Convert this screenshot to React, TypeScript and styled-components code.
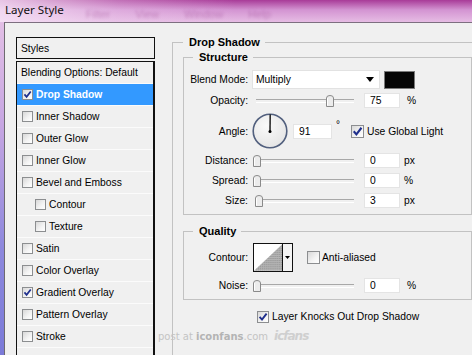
import React from 'react';
import styled, { createGlobalStyle } from 'styled-components';

const Global = createGlobalStyle`
  html, body { margin: 0; padding: 0; }
  body {
    width: 472px; height: 355px; overflow: hidden;
    font-family: "Liberation Sans", Arial, sans-serif;
    font-size: 10.3px; color: #000;
  }
`;

const Window = styled.div`
  width: 472px; height: 355px; overflow: hidden; position: relative;
  display: flex; flex-direction: column;
  background: linear-gradient(180deg, #e8c4e6 0%, #c7a6e2 35%, #8d88dd 70%, #7b7ad8 100%);
`;

const TitleBar = styled.div`
  height: 22px; flex: none; display: flex; align-items: center;
  padding-left: 5px; box-sizing: border-box;
  background:
    linear-gradient(90deg, rgba(248,232,248,0.8) 0%, rgba(240,210,240,0.35) 25%, rgba(230,180,230,0) 50%),
    linear-gradient(180deg, #a83b98 0%, #d394d2 45%, #e6bce4 100%);
`;

const Title = styled.span`
  font-family: "Noto Sans", "Open Sans", sans-serif;
  font-size: 11.6px; color: #111; line-height: 16px; margin-top: -3px;
`;

const BlurMenu = styled.span`
  margin-left: 22px; margin-top: 6px;
  font-family: "Liberation Sans", sans-serif; font-size: 11px; word-spacing: 22px;
  color: rgba(140, 50, 130, 0.35); filter: blur(1.4px);
`;

const Body = styled.div`
  flex: 1; display: flex; align-items: flex-start;
  margin-left: 4px; border-left: 1px solid #6e6a70; border-top: 1px solid #7d6f80;
  background: #f0f0f0; padding: 13px 0 0 11px; overflow: hidden; position: relative;
`;

const Sidebar = styled.div`
  width: 139px; flex: none; margin-top: 1px;
  display: flex; flex-direction: column; gap: 1px; height: 420px;
`;

const SideHeader = styled.div`
  height: 22px; border: 1px solid #111; display: flex; align-items: center;
  padding-left: 4px; box-sizing: border-box; flex: none;
`;

const SideList = styled.div`
  flex: 1; margin-top: 1px; border: 1px solid #111; border-right-width: 2px; display: flex; flex-direction: column;
`;

const SideRow = styled.div<{ $indent: number; $selected?: boolean }>`
  height: 21px; flex: none; border-bottom: 1px solid #fbfbfb;
  display: flex; align-items: center; gap: 3px;
  padding-left: ${p => p.$indent}px;
  background: ${p => (p.$selected ? '#3399ff' : '#f0f0f0')};
  color: ${p => (p.$selected ? '#fff' : '#000')};
  font-weight: ${p => (p.$selected ? 'bold' : 'normal')};
  white-space: nowrap;
`;

const Box = styled.span<{ $size: number }>`
  width: ${p => p.$size}px; height: ${p => p.$size}px; flex: none;
  box-sizing: border-box; border: 1px solid #8c8e90;
  background: linear-gradient(135deg, #d8d8d8 0%, #f4f4f4 60%, #ffffff 100%);
  display: flex; align-items: center; justify-content: center;
`;

function Check({ on, size = 11 }: { on?: boolean; size?: number }) {
  return (
    <Box $size={size}>
      {on && (
        <svg width={size - 2} height={size - 2} viewBox="0 0 10 10">
          <path d="M1.6 4.8 L4 7.6 L8.6 1.6" fill="none" stroke="#1f2f8c" strokeWidth="1.9" />
        </svg>
      )}
    </Box>
  );
}

const Main = styled.div`
  margin-left: 17px; flex: none; display: flex; flex-direction: column;
`;

const Group = styled.fieldset<{ $width: number; $pad: string }>`
  margin: 0; min-width: 0; width: ${p => p.$width}px; box-sizing: border-box;
  border: 1px solid #c2c2c2; padding: ${p => p.$pad};
`;

const Legend = styled.legend`
  font-weight: bold; font-size: 11px; line-height: 13px; padding: 0 5px 0 6px;
`;

const SubGroup = styled(Group)<{ $top: number }>`
  margin-top: ${p => p.$top}px;
`;

const Row = styled.div<{ $h: number; $top?: number }>`
  display: flex; align-items: center; height: ${p => p.$h}px;
  margin-top: ${p => p.$top ?? 0}px; white-space: nowrap;
`;

const Label = styled.span`
  width: 55px; flex: none; display: flex; justify-content: flex-end;
  margin-right: 4px; white-space: nowrap;
`;

const Select = styled.div`
  width: 128px; height: 19px; box-sizing: border-box; background: #fff;
  border: 1px solid #e2e2e2; display: flex; align-items: center; justify-content: space-between;
  padding: 0 5px 0 3px;
`;

const Swatch = styled.div`
  width: 31px; height: 18px; margin-left: 4px; box-sizing: border-box;
  background: #050505; border: 1px solid #7a7a7a;
`;

const Input = styled.div<{ $w: number; $left: number }>`
  width: ${p => p.$w}px; height: 15px; box-sizing: border-box; margin-left: ${p => p.$left}px;
  background: #fff; border: 1px solid #e4e4e4; padding-left: 5px;
  display: flex; align-items: center;
`;

const Unit = styled.span<{ $left: number }>`
  margin-left: ${p => p.$left}px;
`;

const SliderWrap = styled.div`
  width: 104px; height: 15px; flex: none; position: relative;
  display: flex; align-items: center;
`;

const Track = styled.div`
  margin: 0 2px 0 4px; flex: 1; height: 2px; border-top: 1px solid #a8a8a8; border-bottom: 1px solid #fff;
`;

const Thumb = styled.svg`
  position: absolute; top: 2px;
`;

function Slider({ value }: { value: number }) {
  const left = 4 + (value / 100) * 98 - 3.5;
  return (
    <SliderWrap>
      <Track />
      <Thumb width="8" height="12" viewBox="0 0 8 12" style={{ left }}>
        <path d="M0.5 11.5 V3 Q0.5 0.5 4 0.5 Q7.5 0.5 7.5 3 V11.5 Z" fill="#ececec" stroke="#8a8a8a" />
        <path d="M1.5 10.5 V3.2" stroke="#fff" />
      </Thumb>
    </SliderWrap>
  );
}

const Degree = styled.span`
  width: 15px; margin-left: 4px; align-self: flex-start; margin-top: 6px; font-size: 10px;
`;

const CheckLabel = styled.span<{ $left: number }>`
  margin-left: ${p => p.$left}px;
`;

const ContourBox = styled.div`
  width: 40px; height: 29px; margin-left: 1px; box-sizing: border-box;
  border: 1px solid #111; display: flex; background: #fff;
`;

const ContourDrop = styled.div`
  width: 9px; border-left: 1px solid #111; display: flex; align-items: center; justify-content: center;
  background: #f4f4f4;
`;

const KnockRow = styled.div`
  display: flex; align-items: center; gap: 3px; margin: 10px 0 0 74px; height: 13px; white-space: nowrap;
`;

const Watermark = styled.div`
  position: absolute; left: 153px; top: 306px; display: flex; align-items: baseline;
  font-family: "DejaVu Sans", sans-serif; font-size: 10px; color: #c4c4c4; white-space: nowrap;
`;

const WmBold = styled.b`
  color: #b4b4b4;
`;

const WmLogo = styled.span`
  margin-left: 6px; font-style: italic; font-weight: bold; font-size: 12px;
  letter-spacing: -1px; color: #cfcfcf;
`;

const listItems: { label: string; indent: number; checked?: boolean; selected?: boolean }[] = [
  { label: 'Drop Shadow', indent: 5, checked: true, selected: true },
  { label: 'Inner Shadow', indent: 5 },
  { label: 'Outer Glow', indent: 5 },
  { label: 'Inner Glow', indent: 5 },
  { label: 'Bevel and Emboss', indent: 5 },
  { label: 'Contour', indent: 18 },
  { label: 'Texture', indent: 18 },
  { label: 'Satin', indent: 5 },
  { label: 'Color Overlay', indent: 5 },
  { label: 'Gradient Overlay', indent: 5, checked: true },
  { label: 'Pattern Overlay', indent: 5 },
  { label: 'Stroke', indent: 5 },
];

export default function App() {
  return (
    <>
      <Global />
      <Window>
        <TitleBar>
          <Title>Layer Style</Title>
          <BlurMenu>Filter View Window Help</BlurMenu>
        </TitleBar>
        <Body>
          <Sidebar>
            <SideHeader>Styles</SideHeader>
            <SideList>
              <SideRow $indent={4}>Blending Options: Default</SideRow>
              {listItems.map(it => (
                <SideRow key={it.label} $indent={it.indent} $selected={it.selected}>
                  <Check on={it.checked} />
                  {it.label}
                </SideRow>
              ))}
              <SideRow $indent={5} />
            </SideList>
          </Sidebar>
          <Main>
            <Group $width={330} $pad="2px 0 40px 10px">
              <Legend>Drop Shadow</Legend>
              <SubGroup $width={289} $pad="6px 0 6px 9px" $top={0}>
                <Legend>Structure</Legend>
                <Row $h={19}>
                  <Label>Blend Mode:</Label>
                  <Select>
                    <span>Multiply</span>
                    <svg width="8" height="5" viewBox="0 0 8 5"><path d="M0 0 H8 L4 5 Z" fill="#000" /></svg>
                  </Select>
                  <Swatch />
                </Row>
                <Row $h={15} $top={4}>
                  <Label>Opacity:</Label>
                  <Slider value={75} />
                  <Input $w={36} $left={8}>75</Input>
                  <Unit $left={7}>%</Unit>
                </Row>
                <Row $h={36} $top={5}>
                  <Label>Angle:</Label>
                  <svg width="36" height="36" viewBox="0 0 36 36">
                    <defs>
                      <radialGradient id="dialg" cx="0.4" cy="0.35" r="0.7">
                        <stop offset="0" stopColor="#fafafa" />
                        <stop offset="1" stopColor="#e4e4e4" />
                      </radialGradient>
                    </defs>
                    <circle cx="18" cy="18" r="16.8" fill="url(#dialg)" stroke="#52607e" strokeWidth="1.6" />
                    <line x1="18" y1="18" x2="18.2" y2="1.5" stroke="#000" strokeWidth="1.3" />
                    <circle cx="18" cy="18.5" r="1.5" fill="#000" />
                  </svg>
                  <Input $w={39} $left={5}>91</Input>
                  <Degree>°</Degree>
                  <Check on size={13} />
                  <CheckLabel $left={3}>Use Global Light</CheckLabel>
                </Row>
                <Row $h={15} $top={4}>
                  <Label>Distance:</Label>
                  <Slider value={0} />
                  <Input $w={36} $left={8}>0</Input>
                  <Unit $left={4}>px</Unit>
                </Row>
                <Row $h={15} $top={5}>
                  <Label>Spread:</Label>
                  <Slider value={0} />
                  <Input $w={36} $left={8}>0</Input>
                  <Unit $left={4}>%</Unit>
                </Row>
                <Row $h={15} $top={5}>
                  <Label>Size:</Label>
                  <Slider value={3} />
                  <Input $w={36} $left={8}>3</Input>
                  <Unit $left={4}>px</Unit>
                </Row>
              </SubGroup>
              <SubGroup $width={289} $pad="5px 0 6px 9px" $top={10}>
                <Legend>Quality</Legend>
                <Row $h={29}>
                  <Label>Contour:</Label>
                  <ContourBox>
                    <svg width="29" height="27" viewBox="0 0 29 27">
                      <defs>
                        <pattern id="dots" width="2" height="2" patternUnits="userSpaceOnUse">
                          <rect width="2" height="2" fill="#b4b4b4" />
                          <rect width="1" height="1" fill="#8e8e8e" />
                        </pattern>
                      </defs>
                      <path d="M0 27 L29 0 V27 Z" fill="url(#dots)" />
                    </svg>
                    <ContourDrop>
                      <svg width="5" height="3" viewBox="0 0 5 3"><path d="M0 0 H5 L2.5 3 Z" fill="#000" /></svg>
                    </ContourDrop>
                  </ContourBox>
                  <CheckLabel $left={14}><Check size={13} /></CheckLabel>
                  <CheckLabel $left={2}>Anti-aliased</CheckLabel>
                </Row>
                <Row $h={15} $top={6}>
                  <Label>Noise:</Label>
                  <Slider value={0} />
                  <Input $w={36} $left={8}>0</Input>
                  <Unit $left={7}>%</Unit>
                </Row>
              </SubGroup>
              <KnockRow>
                <Check on size={12} />
                Layer Knocks Out Drop Shadow
              </KnockRow>
            </Group>
          </Main>
          <Watermark>
            post at&nbsp;<WmBold>iconfans</WmBold>.com
            <WmLogo>icfans</WmLogo>
          </Watermark>
        </Body>
      </Window>
    </>
  );
}
